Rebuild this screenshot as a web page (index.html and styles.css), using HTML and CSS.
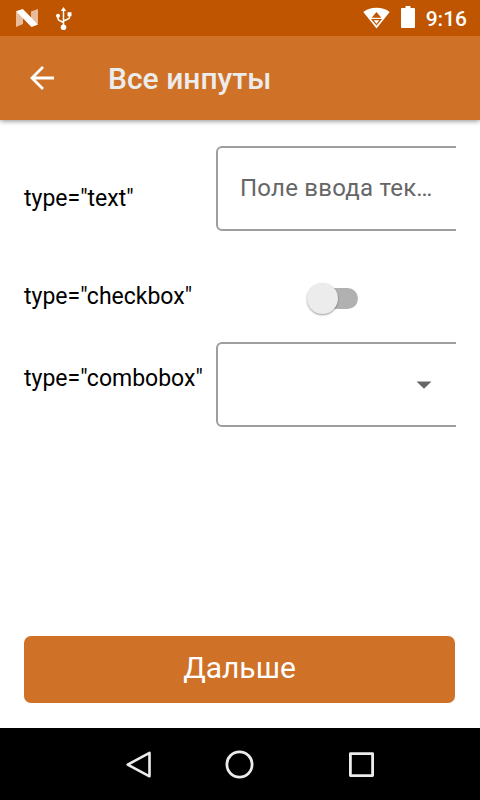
FILE: index.html
```html
<!DOCTYPE html>
<html lang="ru">
<head>
    <meta charset="UTF-8">
    <meta name="viewport" content="width=device-width, initial-scale=1.0">
    <title>Все инпуты</title>
    <link rel="stylesheet" href="styles.css">
</head>
<body>
    <div class="screen">
      <div class="status-bar">
        <svg class="icon-n" width="22" height="18" viewBox="0 0 22 18">
          <path fill="#e8bc9b" d="M0 2.5L7 6.5V15L0 18zM15 2.5L22 0V15L15 11z"/>
          <path fill="#fff" d="M0 2.2L6.8 0L22 15.4L15.5 18z"/>
        </svg>
        <svg class="icon-usb" width="16" height="24" viewBox="0 0 16 24">
          <g fill="none" stroke="#fff" stroke-width="1.5">
            <path d="M7.5 3v18M2 8v3.5q0 1.5 1.5 2L7.5 15.5M13.5 7v3q0 1.5-1.5 2L7.5 14"/>
          </g>
          <path fill="#fff" d="M7.5 0l2.7 4H4.8zM11.5 5.2h4v4h-4z"/>
          <circle fill="#fff" cx="2" cy="8.7" r="2"/>
          <circle fill="#fff" cx="7.5" cy="20.3" r="2.8"/>
        </svg>
        <div class="status-right">
          <svg width="28" height="22" viewBox="0 0 28 22">
            <path fill="#fff" d="M0.3 5Q6 .8 13.5 .8T26.7 5L13.5 21.4z"/>
            <path fill="#bf5500" d="M13.5 5l4.8 5.7H8.7zM7.9 12.1h11.2L13.5 18.5z"/>
            <path fill="#fff" d="M10.6 13.2h5.8L13.5 16.8z"/>
          </svg>
          <svg class="icon-battery" width="14" height="22" viewBox="0 0 14 22">
            <path fill="#fff" d="M4.5 0h5v2H13q1 0 1 1v18q0 1-1 1H1q-1 0-1-1V3q0-1 1-1h3.5z"/>
          </svg>
          <span class="clock">9:16</span>
        </div>
      </div>

      <div class="app-bar">
        <svg width="24" height="24" viewBox="0 0 24 24">
          <path fill="none" stroke="#fff" stroke-width="2.8" d="M24 12H2.5M13 1L2 12L13 23"/>
        </svg>
        <h1>Все инпуты</h1>
      </div>

      <div class="content">
        <div class="row row-text">
          <label for="textInput">type="text"</label>
          <div class="field-clip">
            <input class="field" type="text" id="textInput" placeholder="Поле ввода текста">
          </div>
        </div>

        <div class="row row-checkbox">
          <span class="label">type="checkbox"</span>
          <div class="switch">
            <div class="thumb"></div>
          </div>
        </div>

        <div class="row row-combobox">
          <span class="label">type="combobox"</span>
          <div class="field-clip">
            <div class="field combobox">
              <svg width="16" height="8" viewBox="0 0 16 8">
                <path fill="#666" d="M.5 .5h15L8 7.8z"/>
              </svg>
            </div>
          </div>
        </div>

        <button class="next">Дальше</button>
      </div>

      <div class="nav-bar">
        <svg width="28" height="30" viewBox="0 0 28 30">
          <path fill="none" stroke="#ececec" stroke-width="2.6" stroke-linejoin="round" d="M24.5 2.9V26.3L2.7 14.6z"/>
        </svg>
        <svg width="30" height="30" viewBox="0 0 30 30">
          <circle fill="none" stroke="#ececec" stroke-width="2.8" cx="14.5" cy="14.5" r="12.6"/>
        </svg>
        <svg class="icon-recents" width="26" height="30" viewBox="0 0 26 30">
          <rect fill="none" stroke="#ececec" stroke-width="2.8" stroke-linejoin="round" x="1.4" y="3.6" width="22.2" height="22"/>
        </svg>
      </div>
    </div>
</body>
</html>
```
FILE: styles.css
```css
* {
    box-sizing: border-box;
}
body {
    margin: 0;
    font-family: Roboto, sans-serif;
    background: #fff;
}
svg {
    display: block;
    flex-shrink: 0;
}
.screen {
    display: flex;
    flex-direction: column;
    width: 480px;
    height: 800px;
    overflow: hidden;
}
.status-bar {
    display: flex;
    align-items: center;
    position: relative;
    z-index: 1;
    height: 36px;
    padding: 0 12px 0 16px;
    background: #bf5500;
}
.icon-usb {
    margin-left: 18px;
    margin-top: 1px;
}
.status-right {
    display: flex;
    align-items: center;
    margin-left: auto;
    margin-right: 1px;
}
.icon-battery {
    margin-left: 10px;
    margin-top: -2px;
}
.clock {
    margin-left: 11px;
    margin-top: 2px;
    font-size: 21px;
    line-height: 24px;
    font-weight: 500;
    color: #fff;
}
.app-bar {
    display: flex;
    align-items: center;
    height: 84px;
    padding-left: 30px;
    background: #cf7127;
    box-shadow: 0 1px 5px rgba(0, 0, 0, 0.45);
}
.app-bar h1 {
    margin: 2px 0 0 54px;
    font-size: 30px;
    font-weight: 500;
    line-height: 36px;
    color: #ececec;
}
.content {
    display: flex;
    flex-direction: column;
    flex: 1;
    padding: 26px 24px 25px;
}
.row {
    display: flex;
    align-items: center;
    font-size: 23px;
    line-height: 28px;
    color: #000;
}
.row label,
.row .label {
    width: 192px;
    flex-shrink: 0;
    white-space: nowrap;
}
.row-text {
    height: 85px;
}
.row-text label {
    padding-top: 21px;
}
.row-checkbox {
    height: 32px;
    margin-top: 49px;
}
.row-checkbox .label {
    padding-top: 2px;
}
.row-combobox {
    height: 85px;
    margin-top: 30px;
}
.row-combobox .label {
    padding-bottom: 11px;
}
/* fields run past the column and get cut at its right edge */
.field-clip {
    flex: 1;
    overflow: hidden;
}
.field {
    display: block;
    width: 264px;
    height: 85px;
    padding: 0 42px 2px 22px;
    border: 2px solid #9e9e9e;
    border-radius: 6px;
    background: #fff;
    font-family: Roboto, sans-serif;
    font-size: 24px;
    letter-spacing: 0.225px;
    text-overflow: ellipsis;
    outline: none;
}
.field::placeholder {
    color: #666;
    opacity: 1;
}
.combobox {
    display: flex;
    align-items: center;
    justify-content: flex-end;
    padding: 0 46px 0 22px;
}
.switch {
    display: flex;
    align-items: center;
    width: 50px;
    height: 21px;
    margin-left: 92px;
    margin-top: 5px;
    border-radius: 11px;
    background: #b1b1b1;
}
.thumb {
    width: 31px;
    height: 31px;
    flex-shrink: 0;
    margin-left: -1px;
    border-radius: 50%;
    background: #ececec;
    box-shadow: 0 1px 2px rgba(0, 0, 0, 0.4);
}
.next {
    width: 431px;
    height: 67px;
    margin-top: auto;
    padding: 0 0 4px;
    border: none;
    border-radius: 7px;
    background: #cf7127;
    color: #fff;
    font-family: Roboto, sans-serif;
    font-size: 30px;
    cursor: pointer;
}
.nav-bar {
    display: flex;
    align-items: center;
    height: 72px;
    gap: 72px;
    padding: 2px 0 0 125px;
    background: #000;
}
.icon-recents {
    margin-left: 22px;
}
```
